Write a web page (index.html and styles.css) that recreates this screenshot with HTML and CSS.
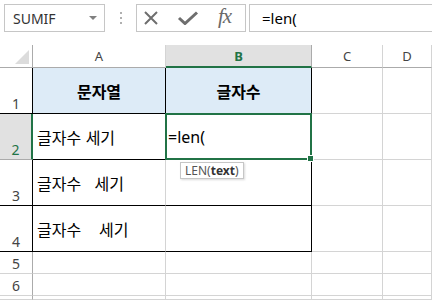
FILE: index.html
```html
<!DOCTYPE html>
<html lang="ko">
<head>
    <meta charset="UTF-8">
    <title>SUMIF - LEN</title>
    <link rel="stylesheet" href="styles.css">
</head>
<body>
    <div class="formula-bar">
        <div class="name-box">
            <span>SUMIF</span>
            <span class="caret"></span>
        </div>
        <div class="grip"><i></i><i></i><i></i></div>
        <div class="buttons">
            <svg class="icon" width="16" height="14" viewBox="0 0 16 14">
                <path d="M2 1 L14 13 M14 1 L2 13" stroke="#6e6e6e" stroke-width="2" fill="none"/>
            </svg>
            <svg class="icon" width="22" height="14" viewBox="0 0 22 14">
                <path d="M2 7 L8 12.5 L20 1.5" stroke="#6e6e6e" stroke-width="3" fill="none"/>
            </svg>
            <span class="fx">fx</span>
        </div>
        <div class="formula-input">=len(</div>
    </div>

    <div class="sheet">
        <div class="corner"><span class="tri"></span></div>
        <div class="col-head">A</div>
        <div class="col-head active">B</div>
        <div class="col-head">C</div>
        <div class="col-head">D</div>

        <div class="row-head edge">1</div>
        <div class="cell title">문자열</div>
        <div class="cell title right">글자수</div>
        <div class="cell"></div>
        <div class="cell"></div>

        <div class="row-head active">2</div>
        <div class="cell boxed">글자수 세기</div>
        <div class="cell boxed right selected"><span>=len(</span><span class="handle"></span><span class="tip">LEN(<b>text</b>)</span></div>
        <div class="cell"></div>
        <div class="cell"></div>

        <div class="row-head edge">3</div>
        <div class="cell boxed">글자수   세기</div>
        <div class="cell boxed right"></div>
        <div class="cell"></div>
        <div class="cell"></div>

        <div class="row-head edge">4</div>
        <div class="cell boxed">글자수    세기</div>
        <div class="cell boxed right"></div>
        <div class="cell"></div>
        <div class="cell"></div>

        <div class="row-head">5</div>
        <div class="cell"></div>
        <div class="cell"></div>
        <div class="cell"></div>
        <div class="cell"></div>

        <div class="row-head">6</div>
        <div class="cell"></div>
        <div class="cell"></div>
        <div class="cell"></div>
        <div class="cell"></div>

        <div class="row-head"></div>
        <div class="cell"></div>
        <div class="cell"></div>
        <div class="cell"></div>
        <div class="cell"></div>
    </div>
</body>
</html>
```

FILE: styles.css
```css
body {
    margin: 0;
    padding: 0;
    background-color: #fff;
    font-family: "Noto Sans", "Noto Sans CJK KR", sans-serif;
    color: #000;
    width: 432px;
    height: 300px;
    overflow: hidden;
}
.formula-bar {
    display: flex;
    align-items: stretch;
    height: 28px;
    padding: 4px 0 0 4px;
    margin-bottom: 13px;
}
.name-box {
    width: 101px;
    border: 1px solid #c6c6c6;
    display: flex;
    align-items: center;
    justify-content: space-between;
    padding: 0 7px 0 8px;
    box-sizing: border-box;
    font-size: 14px;
    color: #333;
}
.caret {
    width: 0;
    height: 0;
    border-left: 4px solid transparent;
    border-right: 4px solid transparent;
    border-top: 4px solid #808080;
}
.grip {
    width: 31px;
    display: flex;
    flex-direction: column;
    align-items: center;
    justify-content: center;
    gap: 3px;
}
.grip i {
    width: 2px;
    height: 2px;
    background-color: #b0b0b0;
}
.buttons {
    width: 110px;
    border: 1px solid #c6c6c6;
    box-sizing: border-box;
    display: flex;
    align-items: center;
    padding-left: 6px;
    gap: 18px;
}
.fx {
    font-family: "Liberation Serif", serif;
    font-style: italic;
    font-size: 21px;
    color: #6a6a6a;
    letter-spacing: -1px;
    margin-left: 1px;
    margin-top: -3px;
}
.formula-input {
    flex: 1;
    margin-left: 3px;
    border: 1px solid #c6c6c6;
    border-right: none;
    font-size: 15px;
    padding-left: 12px;
    line-height: 26px;
}
.sheet {
    display: grid;
    grid-template-columns: 33px 133px 146px 71px 49px;
    grid-template-rows: 23px 46px 46px 46px 46px 22px 22px 4px;
}
.sheet > div {
    box-sizing: border-box;
}
.corner {
    position: relative;
    border-right: 1px solid #ababab;
    border-bottom: 1px solid #ababab;
}
.tri {
    position: absolute;
    right: 3px;
    bottom: 3px;
    width: 0;
    height: 0;
    border-left: 14px solid transparent;
    border-bottom: 14px solid #dcdcdc;
}
.col-head {
    border-right: 1px solid #d4d4d4;
    border-bottom: 1px solid #ababab;
    font-size: 13px;
    color: #444;
    display: flex;
    align-items: center;
    justify-content: center;
}
.col-head.active {
    background-color: #e1e1e1;
    color: #217346;
    font-weight: bold;
    border-bottom: 2px solid #217346;
    border-right-color: #ababab;
}
.row-head {
    border-right: 1px solid #ababab;
    border-bottom: 1px solid #d4d4d4;
    font-size: 14px;
    color: #444;
    display: flex;
    align-items: flex-end;
    justify-content: center;
    padding-bottom: 0;
}
.row-head.edge {
    border-right-color: #000;
    border-bottom-color: #000;
}
.row-head.active {
    background-color: #e1e1e1;
    color: #217346;
    border-right: 2px solid #217346;
    border-bottom-color: #ababab;
}
.cell {
    border-right: 1px solid #d4d4d4;
    border-bottom: 1px solid #d4d4d4;
    font-family: "Noto Sans CJK KR", sans-serif;
    font-size: 16px;
    display: flex;
    align-items: center;
    padding-left: 4px;
    white-space: pre;
}
.cell.title {
    background-color: #ddebf7;
    font-weight: bold;
    justify-content: center;
    padding-left: 0;
    border-bottom-color: #000;
    border-right-color: #000;
}
.cell.boxed {
    border-bottom-color: #000;
}
.cell.right {
    border-right-color: #000;
}
.cell.selected {
    position: relative;
    font-family: "Noto Sans", sans-serif;
    font-size: 16px;
    padding-left: 2px;
}
.selected::after {
    content: "";
    position: absolute;
    left: -1px;
    top: -1px;
    right: -1px;
    bottom: -1px;
    border: 2px solid #217346;
}
.handle {
    position: absolute;
    right: -3px;
    bottom: -3px;
    width: 5px;
    height: 5px;
    background-color: #217346;
    border: 1px solid #fff;
    z-index: 2;
}
.tip {
    position: absolute;
    left: 14px;
    top: 48px;
    padding: 0 4px;
    height: 17px;
    line-height: 16px;
    border: 1px solid #c6c6c6;
    box-sizing: border-box;
    background-color: #fff;
    box-shadow: 1px 1px 2px rgba(0, 0, 0, 0.15);
    font-family: "Noto Sans", sans-serif;
    font-size: 12px;
    color: #555;
    z-index: 3;
}
.tip b {
    color: #333;
}
```
